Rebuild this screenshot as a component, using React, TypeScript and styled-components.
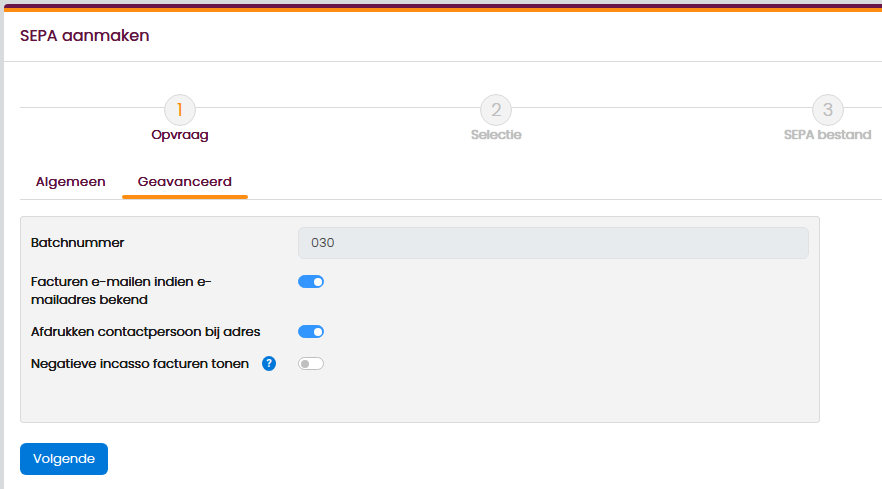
import React, { useState } from "react";
import styled, { createGlobalStyle } from "styled-components";

const plum = "#5f123f";
const orange = "#fd8d13";
const line = "#d9dadc";
const firm = "0 0 0 currentColor, 0 0 0 currentColor, 0 0 0 currentColor";

const GlobalStyle = createGlobalStyle`
  *, *::before, *::after { box-sizing: border-box; }
  body {
    margin: 0;
    background: ${line};
    color: #1b1b1b;
    font: 300 13px/18px Poppins, Inter, sans-serif;
    overflow: hidden;
  }
`;

const Page = styled.div`
  min-height: 100vh;
  padding: 4px 0 0 4px;
  display: flex;
`;

const Dialog = styled.main`
  flex: 1;
  min-width: 0;
  background: #fff;
  border-top: 4px solid #6b1648;
  border-top-left-radius: 4px;
  overflow: hidden;
`;

const Header = styled.header`
  border-top: 4px solid ${orange};
  border-bottom: 1px solid ${line};
  padding: 12px 16px 13px;
`;

const Title = styled.h1`
  margin: 0;
  color: ${plum};
  font-size: 16px;
  font-weight: 400;
  line-height: 24px;
  text-shadow: 0 0 0 currentColor;
`;

const Body = styled.div`
  padding: 32px 0 14px 16px;
`;

const Steps = styled.ol`
  position: relative;
  list-style: none;
  margin: 0;
  padding: 0;
  min-width: 983px;
  display: flex;
  justify-content: space-around;

  &::before {
    content: "";
    position: absolute;
    top: 13px;
    left: 0;
    right: 0;
    height: 1px;
    background: ${line};
  }
`;

const Step = styled.li<{ $active?: boolean }>`
  position: relative;
  display: flex;
  flex-direction: column;
  align-items: center;
  color: ${(p) => (p.$active ? plum : "#bfbfbf")};
`;

const StepName = styled.span<{ $active?: boolean }>`
  text-shadow: ${(p) => (p.$active ? firm : `${firm}, 0 0 1px currentColor, 0 0 1px currentColor, 0 0 1px currentColor`)};
`;

const StepNumber = styled.span<{ $active?: boolean }>`
  width: 32px;
  height: 32px;
  border: 1px solid ${line};
  border-radius: 50%;
  background: #f3f3f3;
  color: ${(p) => (p.$active ? orange : "#bfbfbf")};
  font-size: 18px;
  line-height: 30px;
  text-align: center;
  text-shadow: 0 0 0 currentColor;
`;

const Tabs = styled.div`
  display: flex;
  margin-top: 20px;
  border-bottom: 1px solid ${line};
`;

const Tab = styled.button<{ $active: boolean }>`
  position: relative;
  height: 35px;
  padding: 0 16px;
  border: 0;
  background: none;
  color: ${plum};
  font: inherit;
  letter-spacing: 0.5px;
  text-shadow: ${firm};
  cursor: pointer;

  &::after {
    content: "";
    position: absolute;
    left: 0;
    right: 0;
    bottom: 0;
    height: 4px;
    border-radius: 2px;
    background: ${(p) => (p.$active ? orange : "transparent")};
  }
`;

const Panel = styled.section`
  display: flex;
  flex-direction: column;
  gap: 14px;
  max-width: 800px;
  min-height: 207px;
  margin: 16px 16px 20px 0;
  padding: 10px;
  border: 1px solid ${line};
  border-radius: 3px;
  background: #f3f3f3;
`;

const Row = styled.div`
  display: grid;
  grid-template-columns: 231px 36px 1fr;
  align-items: center;
`;

const SwitchRow = styled(Row)`
  align-items: start;
`;

const Label = styled.label`
  grid-column: 1;
  text-shadow: ${firm};
`;

const TextInput = styled.input`
  grid-column: 3;
  width: 100%;
  height: 32px;
  padding: 0 12px;
  border: 1px solid #dfe2e5;
  border-radius: 6px;
  background: #e7ebee;
  color: #333;
  font: inherit;
`;

const Switch = styled.input`
  grid-column: 3;
  appearance: none;
  display: flex;
  align-items: center;
  width: 26px;
  height: 13px;
  margin: 2px 0;
  padding: 0 2px;
  border: 1px solid #bfbfbf;
  border-radius: 7px;
  background: #fff;
  cursor: pointer;

  &::before {
    content: "";
    width: 8px;
    height: 8px;
    border-radius: 50%;
    background: #bfbfbf;
  }

  &:checked {
    justify-content: flex-end;
    padding-right: 1px;
    border-color: #3396ff;
    background: #3396ff;
  }

  &:checked::before {
    background: #fff;
  }
`;

const Help = styled.button`
  grid-column: 2;
  width: 14px;
  height: 15px;
  margin-top: 1px;
  padding: 0;
  border: 0;
  border-radius: 50%;
  background: #0078d9;
  color: #fff;
  font: 700 10px/13px Inter, sans-serif;
  cursor: pointer;
`;

const NextButton = styled.button`
  height: 32px;
  padding: 0 13px;
  border: 0;
  border-radius: 6px;
  background: #0078d9;
  color: #fff;
  font: inherit;
  text-shadow: 0 0 0 currentColor;
  cursor: pointer;
`;

const steps = ["Opvraag", "Selectie", "SEPA bestand"];
const tabs = ["Algemeen", "Geavanceerd"];
const options = [
  { id: "email", label: "Facturen e-mailen indien e-mailadres bekend", on: true },
  { id: "contact", label: "Afdrukken contactpersoon bij adres", on: true },
  { id: "negative", label: "Negatieve incasso facturen tonen", on: false, help: true },
];

export default function App() {
  const [tab, setTab] = useState("Geavanceerd");

  return (
    <Page>
      <GlobalStyle />
      <Dialog>
        <Header>
          <Title>SEPA aanmaken</Title>
        </Header>
        <Body>
          <Steps>
            {steps.map((name, i) => (
              <Step key={name} $active={i === 0}>
                <StepNumber $active={i === 0}>{i + 1}</StepNumber>
                <StepName $active={i === 0}>{name}</StepName>
              </Step>
            ))}
          </Steps>
          <Tabs role="tablist">
            {tabs.map((name) => (
              <Tab
                key={name}
                type="button"
                role="tab"
                aria-selected={tab === name}
                $active={tab === name}
                onClick={() => setTab(name)}
              >
                {name}
              </Tab>
            ))}
          </Tabs>
          <Panel>
            <Row>
              <Label htmlFor="batch">Batchnummer</Label>
              <TextInput id="batch" type="text" defaultValue="030" readOnly />
            </Row>
            {options.map((option) => (
              <SwitchRow key={option.id}>
                <Label htmlFor={option.id}>{option.label}</Label>
                {option.help && (
                  <Help type="button" aria-label="Help">
                    ?
                  </Help>
                )}
                <Switch id={option.id} type="checkbox" defaultChecked={option.on} />
              </SwitchRow>
            ))}
          </Panel>
          <NextButton type="button">Volgende</NextButton>
        </Body>
      </Dialog>
    </Page>
  );
}
